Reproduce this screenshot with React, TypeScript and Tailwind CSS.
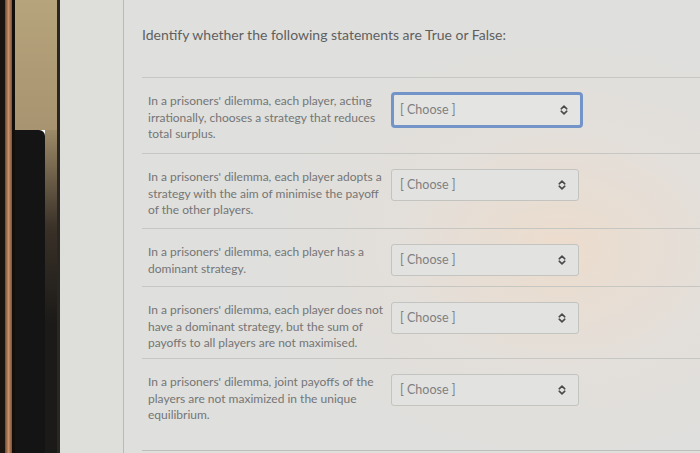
import React from "react";

const rows = [
  {
    text: "In a prisoners' dilemma, each player, acting irrationally, chooses a strategy that reduces total surplus.",
    h: "h-[76px]",
    focus: true,
  },
  {
    text: "In a prisoners' dilemma, each player adopts a strategy with the aim of minimise the payoff of the other players.",
    h: "h-[75px]",
    focus: false,
  },
  {
    text: "In a prisoners' dilemma, each player has a dominant strategy.",
    h: "h-[58px]",
    focus: false,
  },
  {
    text: "In a prisoners' dilemma, each player does not have a dominant strategy, but the sum of payoffs to all players are not maximised.",
    h: "h-[72px]",
    focus: false,
  },
  {
    text: "In a prisoners' dilemma, joint payoffs of the players are not maximized in the unique equilibrium.",
    h: "h-[92px]",
    focus: false,
  },
];

function Arrows() {
  return (
    <svg width="8" height="10" viewBox="0 0 8 10" fill="none" stroke="#4a4a4a" strokeWidth="1.6" strokeLinecap="round" strokeLinejoin="round">
      <path d="M1.2 3.8 L4 1.2 L6.8 3.8" />
      <path d="M1.2 6.2 L4 8.8 L6.8 6.2" />
    </svg>
  );
}

function Select({ focus }: { focus: boolean }) {
  return (
    <div
      className={
        focus
          ? "flex h-[36px] w-[192px] items-center justify-between rounded-[4px] border-[3px] border-[#7394c9] bg-[#e4e4e2] pl-[6px] pr-[12px] -mt-[1px]"
          : "flex h-[32px] w-[188px] items-center justify-between rounded-[3px] border border-[#c3c3c0] bg-[#e2e2e0] pl-[8px] pr-[12px]"
      }
    >
      <span className="text-[12.5px] text-[#808080]">[ Choose ]</span>
      <Arrows />
    </div>
  );
}

export default function App() {
  return (
    <div className="flex h-[453px] w-[700px] overflow-hidden font-['Lato','Open_Sans',sans-serif]">
      {/* device bezel */}
      <div className="flex h-full w-[60px] shrink-0">
        <div className="h-full w-[5px] bg-[#1a1410]" />
        <div className="h-full w-[7px] bg-[linear-gradient(to_right,#6b4a30,#c9906a,#7a5236)]" />
        <div className="h-full w-[3px] bg-[#120e0b]" />
        <div className="flex h-full w-[42px] flex-col">
          <div className="h-[130px] bg-[linear-gradient(to_bottom,#b6a47c,#a89470)]" />
          <div className="flex flex-1">
            <div className="w-[30px] rounded-tr-[6px] bg-[#141414]" />
            <div className="flex-1 bg-[linear-gradient(to_bottom,#9d8a68,#3a3128_30%,#1b1a18_60%)]" />
          </div>
        </div>
        <div className="h-full w-[3px] bg-[#2a2622]" />
      </div>
      {/* screen */}
      <div className="flex h-full flex-1 bg-[radial-gradient(ellipse_300px_220px_at_500px_250px,#ecdccd_0%,#e3dfda_55%,#dfdfdd_100%)]">
        <div className="w-[63px] shrink-0 bg-[#dcdcda]/40" />
        <div className="flex flex-1 flex-col border-l border-[#b9b9b7] pl-[18px]">
          <div className="flex h-[77px] items-start pt-[24px] text-[14px] text-[#5f5f5f]">
            Identify whether the following statements are True or False:
          </div>
          {rows.map((r, i) => (
            <div
              key={i}
              className={`flex ${r.h} items-start border-t border-[#c6c6c3] pt-[15px]`}
            >
              <div className="w-[249px] shrink-0 pl-[6px] pr-[5px] text-[12px] leading-[16.5px] text-[#757575]">
                {r.text}
              </div>
              <Select focus={r.focus} />
            </div>
          ))}
          <div className="flex-1 border-t border-[#bdbdbb]" />
        </div>
      </div>
    </div>
  );
}
